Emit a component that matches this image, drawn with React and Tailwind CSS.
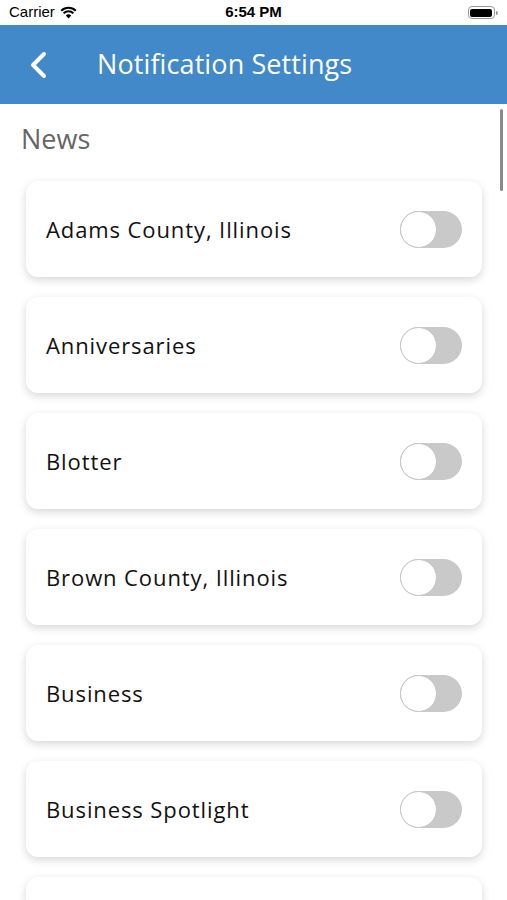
import React, { useState } from "react";

const topics = [
  "Adams County, Illinois",
  "Anniversaries",
  "Blotter",
  "Brown County, Illinois",
  "Business",
  "Business Spotlight",
];

export default function App() {
  return (
    <div
      className="relative h-[900px] w-[507px] overflow-hidden bg-white"
      style={{ fontFamily: "'Open Sans', sans-serif" }}
    >
      <StatusBar />

      {/* header */}
      <header className="flex h-[79px] items-center bg-[#4189c8] text-white">
        <svg width="22" height="28" viewBox="0 0 22 28" className="ml-[27px]">
          <path d="M17 3 L6 14 L17 25" fill="none" stroke="white" strokeWidth="4" strokeLinecap="round" strokeLinejoin="round" />
        </svg>
        <h1 className="ml-[48px] text-[27px] font-normal tracking-[0.1px]">
          Notification Settings
        </h1>
      </header>

      {/* scrollbar */}
      <div className="absolute right-[4px] top-[109px] h-[82px] w-[3px] rounded-full bg-[#8a8a8a]" />

      <main className="pt-[19px]">
        <h2 className="pl-[21px] text-[27px] leading-[32px] text-[#666666]">
          News
        </h2>
        <ul className="mt-[26px] flex flex-col gap-[20px] pl-[26px] pr-[25px]">
          {topics.map((t) => (
            <Row key={t} label={t} />
          ))}
          <li className="h-[96px] rounded-[12px] bg-white shadow-[0_3px_8px_rgba(0,0,0,0.16)]" />
        </ul>
      </main>
    </div>
  );
}

function Row({ label }) {
  const [on, setOn] = useState(false);
  return (
    <li className="flex h-[96px] items-center justify-between rounded-[12px] bg-white pl-[20px] pr-[20px] shadow-[0_3px_8px_rgba(0,0,0,0.16)]">
      <span className="text-[22px] tracking-[0.9px] text-[#111]">{label}</span>
      <button
        onClick={() => setOn(!on)}
        className={`relative h-[37px] w-[62px] rounded-full ${on ? "bg-[#4189c8]" : "bg-[#c9c9c9]"}`}
      >
        <span
          className={`absolute top-0 h-[37px] w-[37px] rounded-full border border-[#c4c4c4] bg-white ${on ? "left-[25px]" : "left-0"}`}
        />
      </button>
    </li>
  );
}

function StatusBar() {
  return (
    <div className="flex h-[25px] items-center justify-between px-[9px] text-[15px] text-black" style={{ fontFamily: "'Liberation Sans', Arial, sans-serif" }}>
      <div className="flex w-[120px] items-center gap-[5px]">
        <span>Carrier</span>
        <svg width="17" height="13" viewBox="0 0 17 13">
          <path d="M8.5 12.5 L5.8 9.6 A4 4 0 0 1 11.2 9.6 Z" fill="black" />
          <path d="M3.6 7.3 A7 7 0 0 1 13.4 7.3" fill="none" stroke="black" strokeWidth="2" />
          <path d="M1.2 4.8 A10.5 10.5 0 0 1 15.8 4.8" fill="none" stroke="black" strokeWidth="2" />
        </svg>
      </div>
      <span className="font-bold">6:54 PM</span>
      <div className="flex w-[120px] items-center justify-end">
        <div className="flex h-[13px] w-[27px] items-center rounded-[4px] border border-[#999] p-[1.5px]">
          <div className="h-full w-full rounded-[2px] bg-black" />
        </div>
        <div className="ml-[1px] h-[4px] w-[2px] rounded-r bg-[#999]" />
      </div>
    </div>
  );
}
